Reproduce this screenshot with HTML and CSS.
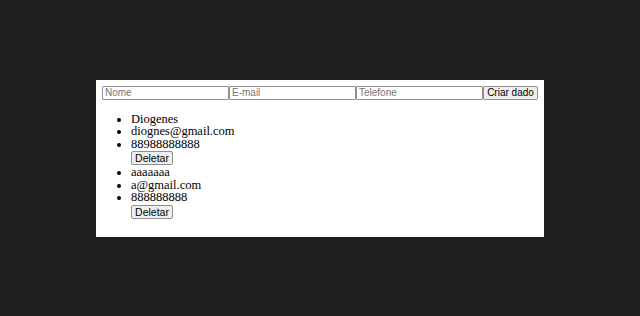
FILE: index.html
```html
<!DOCTYPE html>
<html lang="pt">
<head>
<meta charset="utf-8">
<title>Dados</title>
<link rel="stylesheet" href="styles.css">
</head>
<body>
<div class="card">
  <form class="form-row">
    <input class="field" type="text" placeholder="Nome">
    <input class="field" type="text" placeholder="E-mail">
    <input class="field" type="text" placeholder="Telefone">
    <button class="btn btn-create" type="button">Criar dado</button>
  </form>
  <ul class="list">
    <li>Diogenes</li>
    <li>diognes@gmail.com</li>
    <li>88988888888<br><button class="btn btn-del" type="button">Deletar</button></li>
    <li>aaaaaaa</li>
    <li>a@gmail.com</li>
    <li>888888888<br><button class="btn btn-del" type="button">Deletar</button></li>
  </ul>
</div>
</body>
</html>
```

FILE: styles.css
```css
html, body {
  margin: 0;
  padding: 0;
}
body {
  background: #1e1e1e;
  height: 316px;
  display: flex;
  align-items: center;
  justify-content: center;
}
.card {
  box-sizing: border-box;
  width: 448px;
  height: 157px;
  background: #ffffff;
  padding: 6px;
}
.form-row {
  display: flex;
  margin: 0;
}
.field {
  box-sizing: border-box;
  width: 127px;
  height: 14px;
  margin: 0;
  padding: 0 2px;
  border: 1px solid #8f8f8f;
  border-radius: 1px;
  font-family: "Liberation Sans", Arial, sans-serif;
  font-size: 10px;
  color: #000;
  outline: none;
}
.field::placeholder {
  color: #757575;
}
.btn {
  box-sizing: border-box;
  margin: 0;
  padding: 0;
  font-family: "Liberation Sans", Arial, sans-serif;
  font-size: 10.5px;
  color: #000;
  background: #efefef;
  border: 1px solid #8f8f8f;
  border-radius: 2px;
  white-space: nowrap;
  text-align: center;
}
.btn-create {
  width: 56px;
  height: 14px;
  line-height: 12px;
  font-size: 10px;
}
.btn-del {
  width: 42px;
  height: 14px;
  line-height: 12px;
  vertical-align: top;
  margin: 1px 0 1px 0;
}
.list {
  margin: 13px 0 0 0;
  padding-left: 29px;
  font-family: "Liberation Serif", "Times New Roman", serif;
  font-size: 12.5px;
  line-height: 12.5px;
  color: #000;
}
```
